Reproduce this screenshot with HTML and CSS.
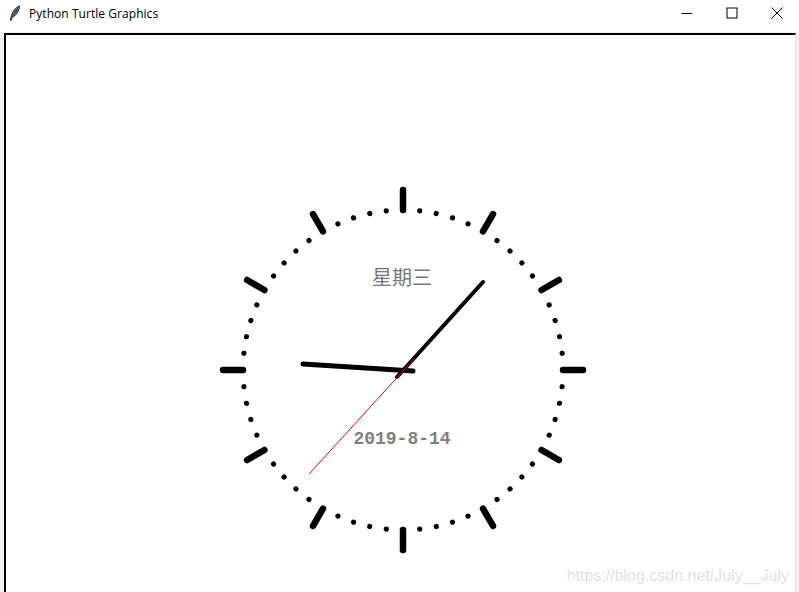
FILE: index.html
```html
<!DOCTYPE html>
<html>
<head>
<meta charset="utf-8">
<link rel="stylesheet" href="styles.css">
</head>
<body>
<div class="window">
  <div class="titlebar">
    <div class="title-left">
      <svg class="app-icon" width="12" height="16" viewBox="0 0 12 16">
        <path d="M10.5 0.8 C6.5 2.5 3.2 6.5 2.2 11.5 L1.2 15.2 L2.2 15.4 L3.3 12.2 C7.5 10.5 10.3 6 10.5 0.8 Z" fill="#5a6a8a" stroke="#1e2a44" stroke-width="0.9"/>
        <path d="M9.6 2.2 L3 12.5" stroke="#1e2a44" stroke-width="0.6"/>
      </svg>
      <span class="title-text">Python Turtle Graphics</span>
    </div>
    <div class="controls">
      <div class="ctl">
        <svg width="12" height="12" viewBox="0 0 12 12"><path d="M0.5 6.5 H11" stroke="#000" stroke-width="1"/></svg>
      </div>
      <div class="ctl">
        <svg width="12" height="12" viewBox="0 0 12 12"><rect x="1" y="1" width="10" height="10" fill="none" stroke="#000" stroke-width="1"/></svg>
      </div>
      <div class="ctl">
        <svg width="12" height="12" viewBox="0 0 12 12"><path d="M0.5 0.5 L11.5 11.5 M11.5 0.5 L0.5 11.5" stroke="#000" stroke-width="1"/></svg>
      </div>
    </div>
  </div>
  <div class="frame">
    <div class="canvas">
      <svg class="drawing" width="789" height="557" viewBox="6 35 789 557">
        <defs>
          <line id="tk" x1="403" y1="190" x2="403" y2="210" stroke="#000" stroke-width="6.5" stroke-linecap="round"/>
          <circle id="dt" cx="403" cy="210" r="2.6" fill="#000"/>
        </defs>
        <g>
          <use href="#tk"/>
          <use href="#dt" transform="rotate(6 403 370)"/>
          <use href="#dt" transform="rotate(12 403 370)"/>
          <use href="#dt" transform="rotate(18 403 370)"/>
          <use href="#dt" transform="rotate(24 403 370)"/>
          <use href="#tk" transform="rotate(30 403 370)"/>
          <use href="#dt" transform="rotate(36 403 370)"/>
          <use href="#dt" transform="rotate(42 403 370)"/>
          <use href="#dt" transform="rotate(48 403 370)"/>
          <use href="#dt" transform="rotate(54 403 370)"/>
          <use href="#tk" transform="rotate(60 403 370)"/>
          <use href="#dt" transform="rotate(66 403 370)"/>
          <use href="#dt" transform="rotate(72 403 370)"/>
          <use href="#dt" transform="rotate(78 403 370)"/>
          <use href="#dt" transform="rotate(84 403 370)"/>
          <use href="#tk" transform="rotate(90 403 370)"/>
          <use href="#dt" transform="rotate(96 403 370)"/>
          <use href="#dt" transform="rotate(102 403 370)"/>
          <use href="#dt" transform="rotate(108 403 370)"/>
          <use href="#dt" transform="rotate(114 403 370)"/>
          <use href="#tk" transform="rotate(120 403 370)"/>
          <use href="#dt" transform="rotate(126 403 370)"/>
          <use href="#dt" transform="rotate(132 403 370)"/>
          <use href="#dt" transform="rotate(138 403 370)"/>
          <use href="#dt" transform="rotate(144 403 370)"/>
          <use href="#tk" transform="rotate(150 403 370)"/>
          <use href="#dt" transform="rotate(156 403 370)"/>
          <use href="#dt" transform="rotate(162 403 370)"/>
          <use href="#dt" transform="rotate(168 403 370)"/>
          <use href="#dt" transform="rotate(174 403 370)"/>
          <use href="#tk" transform="rotate(180 403 370)"/>
          <use href="#dt" transform="rotate(186 403 370)"/>
          <use href="#dt" transform="rotate(192 403 370)"/>
          <use href="#dt" transform="rotate(198 403 370)"/>
          <use href="#dt" transform="rotate(204 403 370)"/>
          <use href="#tk" transform="rotate(210 403 370)"/>
          <use href="#dt" transform="rotate(216 403 370)"/>
          <use href="#dt" transform="rotate(222 403 370)"/>
          <use href="#dt" transform="rotate(228 403 370)"/>
          <use href="#dt" transform="rotate(234 403 370)"/>
          <use href="#tk" transform="rotate(240 403 370)"/>
          <use href="#dt" transform="rotate(246 403 370)"/>
          <use href="#dt" transform="rotate(252 403 370)"/>
          <use href="#dt" transform="rotate(258 403 370)"/>
          <use href="#dt" transform="rotate(264 403 370)"/>
          <use href="#tk" transform="rotate(270 403 370)"/>
          <use href="#dt" transform="rotate(276 403 370)"/>
          <use href="#dt" transform="rotate(282 403 370)"/>
          <use href="#dt" transform="rotate(288 403 370)"/>
          <use href="#dt" transform="rotate(294 403 370)"/>
          <use href="#tk" transform="rotate(300 403 370)"/>
          <use href="#dt" transform="rotate(306 403 370)"/>
          <use href="#dt" transform="rotate(312 403 370)"/>
          <use href="#dt" transform="rotate(318 403 370)"/>
          <use href="#dt" transform="rotate(324 403 370)"/>
          <use href="#tk" transform="rotate(330 403 370)"/>
          <use href="#dt" transform="rotate(336 403 370)"/>
          <use href="#dt" transform="rotate(342 403 370)"/>
          <use href="#dt" transform="rotate(348 403 370)"/>
          <use href="#dt" transform="rotate(354 403 370)"/>
        </g>
        <text class="weekday" x="402" y="285" text-anchor="middle">星期三</text>
        <text class="date" x="402" y="444" text-anchor="middle">2019-8-14</text>
        <line x1="303" y1="364" x2="413" y2="371" stroke="#000" stroke-width="5" stroke-linecap="round"/>
        <line x1="483" y1="282" x2="397" y2="377" stroke="#000" stroke-width="4" stroke-linecap="round"/>
        <line x1="309" y1="474" x2="414" y2="359" stroke="#ff0000" stroke-width="1"/>
        <text class="watermark" x="789" y="581" text-anchor="end">https://blog.csdn.net/July__July</text>
      </svg>
    </div>
  </div>
</div>
</body>
</html>
```

FILE: styles.css
```css
html, body {
  margin: 0;
  padding: 0;
  background: #ffffff;
}
.window {
  width: 799px;
  height: 592px;
  display: flex;
  flex-direction: column;
  overflow: hidden;
}
.titlebar {
  height: 26px;
  padding-bottom: 6px;
  flex: none;
  background: #ffffff;
  display: flex;
  align-items: center;
  justify-content: space-between;
}
.title-left {
  display: flex;
  align-items: center;
  padding-left: 9px;
}
.app-icon {
  display: block;
  margin-right: 8px;
}
.title-text {
  font-family: "Open Sans", "Liberation Sans", sans-serif;
  font-size: 12px;
  color: #000;
  letter-spacing: 0.05px;
}
.controls {
  display: flex;
  align-items: center;
  height: 100%;
}
.ctl {
  width: 45px;
  height: 100%;
  display: flex;
  align-items: center;
  justify-content: center;
}
.ctl svg {
  display: block;
}
.frame {
  flex: 1;
  background: #f0f0f0;
  padding: 1px 3px 0 4px;
  display: flex;
}
.canvas {
  flex: 1;
  background: #ffffff;
  border-top: 2px solid #000;
  border-left: 2px solid #000;
  border-right: 1px solid #e3e3e3;
  overflow: hidden;
}
.drawing {
  display: block;
}
.weekday {
  font-family: "Noto Sans CJK SC", sans-serif;
  font-size: 20px;
  fill: #777777;
}
.date {
  font-family: "Liberation Mono", monospace;
  font-weight: bold;
  font-size: 18px;
  fill: #7f7f7f;
}
.watermark {
  font-family: "Liberation Sans", sans-serif;
  font-size: 16px;
  fill: #dedede;
  fill-opacity: 0.9;
}
```
